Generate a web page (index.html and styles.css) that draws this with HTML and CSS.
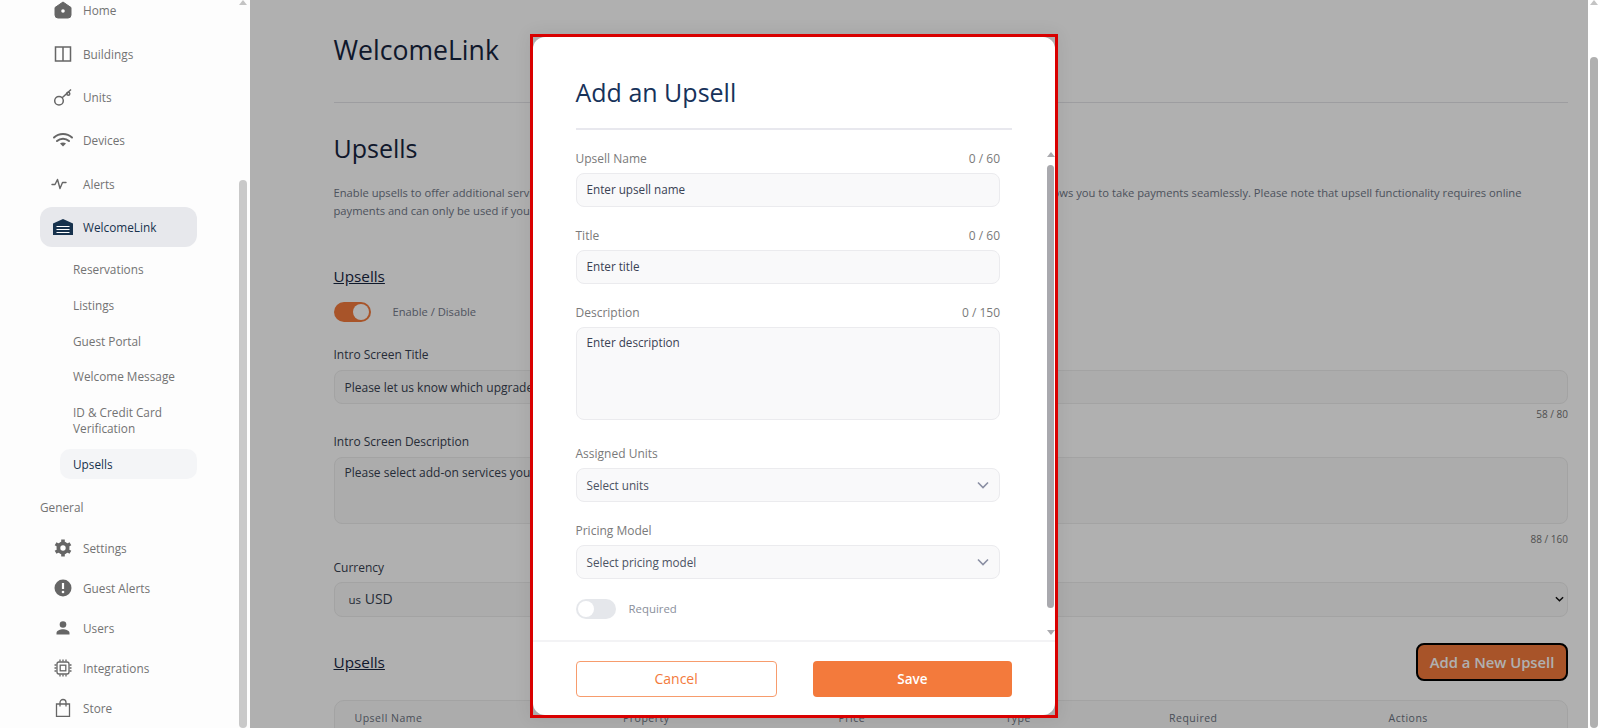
FILE: index.html
```html
<!DOCTYPE html>
<html lang="en">
<head>
    <meta charset="UTF-8">
    <title>Upsells</title>
    <link rel="stylesheet" href="styles.css">
</head>
<body>
    <div class="app">
        <aside class="sidebar">
            <nav class="nav">
                <ul class="nav-group">
                    <li class="nav-item">
                        <svg class="nav-icon" viewBox="0 0 18 18"><path d="M9 1 17 6.500v7.500a3 3 0 0 1-3 3H4a3 3 0 0 1-3-3V6.500z" fill="#666" stroke="#666" stroke-linejoin="round"/><circle cx="9" cy="10" r="1.800" fill="#fff"/></svg>
                        Home
                    </li>
                    <li class="nav-item">
                        <svg class="nav-icon" viewBox="0 0 18 18"><path d="M1.500 2h15v14h-15zM9 2v14" fill="none" stroke="#666" stroke-width="1.500"/></svg>
                        Buildings
                    </li>
                    <li class="nav-item">
                        <svg class="nav-icon" viewBox="0 0 18 18"><g fill="none" stroke="#666" stroke-width="1.500"><circle cx="5" cy="12.800" r="4.300"/><path d="M8.200 9.800 17 1.500"/><circle cx="14.300" cy="5.800" r="1.500"/></g></svg>
                        Units
                    </li>
                    <li class="nav-item">
                        <svg class="nav-icon nav-icon-wide" viewBox="0 0 20 16"><g fill="none" stroke="#666" stroke-width="2" stroke-linecap="round"><path d="M1 5.500c5-4.700 13-4.700 18 0M4 9c3.400-3 8.600-3 12 0"/></g><path d="M7 11.500c1.800-1.200 4.200-1.200 6 0l-3 3z" fill="#666"/></svg>
                        Devices
                    </li>
                    <li class="nav-item">
                        <svg class="nav-icon" viewBox="0 0 18 18"><path d="M-2 9.500h3l2.500-5 2.500 9 2.500-6h3.500" fill="none" stroke="#666" stroke-width="1.400" stroke-linejoin="round" stroke-linecap="round"/></svg>
                        Alerts
                    </li>
                    <li class="nav-item nav-item-active">
                        <svg class="nav-icon nav-icon-wide" viewBox="0 0 20 16"><path d="M0 4.500 10 0l10 4.500V16H0z" fill="#17324d"/><path d="M3.500 7.500h13M3.500 10.500h13M3.500 13.500h13" stroke="#fff" stroke-width="1"/></svg>
                        WelcomeLink
                    </li>
                </ul>
                <ul class="sub-group">
                    <li class="sub-item">Reservations</li>
                    <li class="sub-item">Listings</li>
                    <li class="sub-item">Guest Portal</li>
                    <li class="sub-item">Welcome Message</li>
                    <li class="sub-item sub-item-tall">ID &amp; Credit Card<br>Verification</li>
                    <li class="sub-item sub-item-active">Upsells</li>
                </ul>
                <div class="nav-title">General</div>
                <ul class="nav-group nav-group-tight">
                    <li class="nav-item">
                        <svg class="nav-icon" viewBox="0 0 18 18"><circle cx="9" cy="9" r="6.500" fill="#666"/><path d="M9 .5v17M1.600 4.700l14.800 8.600M1.600 13.300l14.800-8.600" stroke="#666" stroke-width="3.600"/><circle cx="9" cy="9" r="2.700" fill="#fff"/></svg>
                        Settings
                    </li>
                    <li class="nav-item">
                        <svg class="nav-icon" viewBox="0 0 18 18"><circle cx="9" cy="9" r="8.500" fill="#666"/><path d="M9 4v6" stroke="#fff" stroke-width="2.200"/><circle cx="9" cy="13" r="1.300" fill="#fff"/></svg>
                        Guest Alerts
                    </li>
                    <li class="nav-item">
                        <svg class="nav-icon" viewBox="0 0 18 18"><circle cx="9" cy="5.500" r="3.300" fill="#666"/><path d="M2.500 15.500v-1.500c0-2.500 4-3.700 6.500-3.700s6.500 1.200 6.500 3.700v1.500z" fill="#666"/></svg>
                        Users
                    </li>
                    <li class="nav-item">
                        <svg class="nav-icon" viewBox="0 0 18 18"><g fill="none" stroke="#666" stroke-width="1.300"><rect x="3" y="3" width="12" height="12" rx="2"/><rect x="6.200" y="6.200" width="5.600" height="5.600"/><path d="M6 .5v2M9 .5v2M12 .5v2M6 15.500v2M9 15.500v2M12 15.500v2M.5 6h2M.5 9h2M.5 12h2M15.500 6h2M15.500 9h2M15.500 12h2"/></g></svg>
                        Integrations
                    </li>
                    <li class="nav-item">
                        <svg class="nav-icon" viewBox="0 0 18 18"><g fill="none" stroke="#666" stroke-width="1.300"><path d="M2.500 5h13v12.300h-13z"/><path d="M6 7.500V3.500a3 3 0 0 1 6 0v4"/></g></svg>
                        Store
                    </li>
                </ul>
            </nav>
            <div class="scrollbar sidebar-scrollbar">
                <span class="arrow-up"></span>
                <span class="thumb sidebar-thumb"></span>
            </div>
        </aside>

        <div class="page">
            <main class="content">
                <h1 class="page-title">WelcomeLink</h1>
                <h2 class="section-title">Upsells</h2>
                <p class="intro">Enable upsells to offer additional services to all our guests during the check-in process. Connecting our payment gateway such as Stripe allows you to take payments seamlessly. Please note that upsell functionality requires online<br>payments and can only be used if you have a connected payment gateway.</p>

                <h3 class="sub-title">Upsells</h3>
                <div class="switch-row">
                    <span class="switch switch-on"></span>
                    <span class="switch-label">Enable / Disable</span>
                </div>

                <div class="page-label page-label-first">Intro Screen Title</div>
                <div class="page-input">Please let us know which upgrades you would like for your stay</div>
                <div class="page-count">58 / 80</div>

                <div class="page-label">Intro Screen Description</div>
                <div class="page-input page-textarea">Please select add-on services you'd like to include with your reservation below</div>
                <div class="page-count page-count-low">88 / 160</div>

                <div class="page-label">Currency</div>
                <div class="page-input page-select">
                    <span class="currency"><span class="currency-code">us</span> USD</span>
                    <svg class="native-chevron" viewBox="0 0 10 6"><path d="M1 1l4 4 4-4" fill="none" stroke="#111" stroke-width="1.600"/></svg>
                </div>

                <div class="list-head">
                    <h3 class="sub-title sub-title-flat">Upsells</h3>
                    <button class="add-button">Add a New Upsell</button>
                </div>

                <div class="table">
                    <div class="table-head">
                        <span class="col-name">Upsell Name</span>
                        <span>Property</span>
                        <span>Price</span>
                        <span>Type</span>
                        <span>Required</span>
                        <span>Actions</span>
                    </div>
                </div>
            </main>
            <div class="overlay"></div>
        </div>

        <div class="scrollbar page-scrollbar">
            <span class="arrow-up"></span>
            <span class="thumb page-thumb"></span>
        </div>

        <!-- modal -->
        <div class="modal-frame">
            <div class="modal">
                <div class="modal-head">
                    <h2 class="modal-title">Add an Upsell</h2>
                </div>
                <div class="modal-body">
                    <div class="field">
                        <div class="field-top"><span>Upsell Name</span><span>0 / 60</span></div>
                        <div class="input">Enter upsell name</div>
                    </div>
                    <div class="field">
                        <div class="field-top"><span>Title</span><span>0 / 60</span></div>
                        <div class="input">Enter title</div>
                    </div>
                    <div class="field field-wide">
                        <div class="field-top"><span>Description</span><span>0 / 150</span></div>
                        <div class="input textarea">Enter description</div>
                    </div>
                    <div class="field">
                        <div class="field-top"><span>Assigned Units</span></div>
                        <div class="input select">
                            Select units
                            <svg class="chevron" viewBox="0 0 12 8"><path d="M1 1.500l5 5 5-5" fill="none" stroke="#8a8fa3" stroke-width="1.600"/></svg>
                        </div>
                    </div>
                    <div class="field">
                        <div class="field-top"><span>Pricing Model</span></div>
                        <div class="input select">
                            Select pricing model
                            <svg class="chevron" viewBox="0 0 12 8"><path d="M1 1.500l5 5 5-5" fill="none" stroke="#8a8fa3" stroke-width="1.600"/></svg>
                        </div>
                    </div>
                    <div class="required-row">
                        <span class="switch"></span>
                        <span class="required-label">Required</span>
                    </div>
                </div>
                <div class="scrollbar modal-scrollbar">
                    <span class="arrow-up"></span>
                    <span class="thumb modal-thumb"></span>
                    <span class="arrow-down"></span>
                </div>
                <div class="modal-foot">
                    <button class="btn btn-cancel">Cancel</button>
                    <button class="btn btn-save">Save</button>
                </div>
            </div>
        </div>
    </div>
</body>
</html>
```

FILE: styles.css
```css
/* Global Styles */
* {
    box-sizing: border-box;
}

body {
    margin: 0;
    font-family: 'Open Sans', 'Liberation Sans', sans-serif;
    background-color: #fff;
}

ul {
    list-style: none;
    margin: 0;
    padding: 0;
}

.app {
    position: relative;
    display: flex;
    height: 100vh;
    overflow: hidden;
}

/* Sidebar */
.sidebar {
    display: flex;
    width: 250px;
    flex-shrink: 0;
    background-color: #fdfdfd;
}

.nav {
    width: 238px;
    padding: 0 41px 0 40px;
    overflow: hidden;
    font-size: 11.8px;
    color: #737373;
}

.nav-group {
    display: flex;
    flex-direction: column;
    gap: 3.33px;
    margin-top: -9.6px;
}

.nav-group-tight {
    gap: 0;
    margin-top: 11px;
}

.nav-item {
    display: flex;
    align-items: center;
    height: 40px;
    padding-left: 14px;
    gap: 11px;
    border-radius: 12px;
}

.nav-item-active {
    background-color: #e7e8ec;
    color: #17324d;
}

.nav-icon {
    width: 18px;
    height: 18px;
    flex-shrink: 0;
    overflow: visible;
}

.nav-icon-wide {
    width: 20px;
    height: 16px;
    margin-left: -1px;
    margin-right: -1px;
}

.sub-group {
    display: flex;
    flex-direction: column;
    gap: 5.8px;
    margin-top: 7px;
    margin-left: 20px;
}

.sub-item {
    display: flex;
    align-items: center;
    height: 30px;
    padding-left: 13px;
    border-radius: 10px;
}

.sub-item-tall {
    height: auto;
    padding-top: 7px;
    padding-bottom: 7px;
    line-height: 16px;
}

.sub-item-active {
    background-color: #f4f5f7;
    color: #17324d;
}

.nav-title {
    margin-top: 18px;
    line-height: 20px;
}

/* Fake scrollbars */
.scrollbar {
    display: flex;
    flex-direction: column;
    align-items: center;
}

.arrow-up {
    width: 0;
    height: 0;
    border-left: 4px solid transparent;
    border-right: 4px solid transparent;
    border-bottom: 5px solid #c4c4c4;
}

.arrow-down {
    width: 0;
    height: 0;
    border-left: 4px solid transparent;
    border-right: 4px solid transparent;
    border-top: 5px solid #a9a9ae;
}

.thumb {
    border-radius: 4px;
}

.sidebar-scrollbar {
    width: 8px;
    margin-left: 1px;
}

.sidebar-thumb {
    width: 8px;
    height: 600px;
    margin-top: 175px;
    background-color: #c9c9c9;
}

.page-scrollbar {
    width: 12px;
    flex-shrink: 0;
    padding-right: 1px;
}

.page-thumb {
    width: 8px;
    height: 700px;
    margin-top: 52px;
    background-color: #b0b0b0;
}

.modal-scrollbar {
    position: absolute;
    top: 115px;
    right: 1px;
    width: 7px;
}

.modal-thumb {
    width: 7px;
    height: 443px;
    margin-top: 8px;
    margin-bottom: 22px;
    background-color: #a9a9ae;
}

.modal-scrollbar .arrow-up {
    border-bottom-color: #a9a9ae;
}

/* Page behind the modal */
.page {
    position: relative;
    flex: 1;
    min-width: 0;
}

.overlay {
    position: absolute;
    top: 0;
    right: 0;
    bottom: 0;
    left: 0;
    background-color: rgba(0, 0, 0, 0.31);
}

.content {
    padding: 32px 20px 0 83.5px;
    color: #17253f;
}

.page-title {
    margin: 0;
    padding-bottom: 34px;
    border-bottom: 1px solid #e4e4e8;
    font-size: 26.6px;
    font-weight: 400;
    line-height: 36px;
}

.section-title {
    margin: 27px 0 0;
    font-size: 25px;
    font-weight: 400;
    line-height: 36px;
}

.intro {
    margin: 18px 0 0;
    font-size: 11.2px;
    line-height: 17.5px;
    color: #6f7787;
}

.sub-title {
    margin: 47px 0 0;
    font-size: 15.3px;
    font-weight: 500;
    line-height: 20px;
    text-decoration: underline;
}

.sub-title-flat {
    margin: 0;
}

.switch-row {
    display: flex;
    align-items: center;
    margin-top: 16px;
    gap: 22px;
}

.switch {
    position: relative;
    display: inline-block;
    width: 40px;
    height: 20px;
    border-radius: 10px;
    background-color: #e5e7eb;
}

.switch::after {
    content: "";
    position: absolute;
    top: 2px;
    left: 2px;
    width: 16px;
    height: 16px;
    border-radius: 50%;
    background-color: #fff;
}

.switch-on {
    width: 37px;
    background-color: #f37a3c;
}

.switch-on::after {
    left: 19px;
}

.switch-label {
    padding-bottom: 1px;
    font-size: 11.2px;
    color: #73798a;
}

.page-label {
    margin-top: 12px;
    font-size: 12px;
    font-weight: 500;
    line-height: 18px;
    color: #374151;
}

.page-label-first {
    margin-top: 24px;
}

.page-input {
    display: flex;
    align-items: center;
    height: 34px;
    margin-top: 6px;
    padding: 0 10px;
    border: 1px solid #ececec;
    border-radius: 8px;
    background-color: #f9f9f9;
    font-size: 12px;
    color: #374151;
}

.page-textarea {
    align-items: flex-start;
    height: 67px;
    padding-top: 6px;
}

.page-select {
    justify-content: space-between;
    margin-top: 5px;
    height: 35px;
    padding: 0 3px 2px 14px;
}

.currency {
    font-size: 14px;
}

.currency-code {
    font-size: 11.5px;
}

.native-chevron {
    width: 9px;
    height: 6px;
}

.page-count {
    margin-top: 3px;
    font-size: 10px;
    line-height: 14px;
    text-align: right;
    color: #737373;
}

.page-count-low {
    margin-top: 8px;
}

.page-count-low + .page-label {
    margin-top: 13px;
}

.list-head {
    display: flex;
    justify-content: space-between;
    align-items: center;
    margin-top: 26px;
}

.add-button {
    width: 152px;
    height: 38px;
    border: 2px solid #000;
    border-radius: 8px;
    background-color: #f37a3c;
    font-family: inherit;
    font-size: 14.8px;
    font-weight: 600;
    color: #fff;
}

.table {
    height: 80px;
    margin-top: 19px;
    border: 1px solid #ececec;
    border-radius: 10px;
    background-color: #f9fafa;
}

.table-head {
    display: grid;
    grid-template-columns: 268.5px 215.5px 167px 163.5px 219.5px 1fr;
    padding: 9px 0 0 20px;
    font-size: 10.5px;
    font-weight: 500;
    letter-spacing: 0.5px;
    line-height: 16px;
    color: #6b7280;
}

/* Modal */
.modal-frame {
    position: absolute;
    top: 34px;
    left: 530px;
    width: 528px;
    height: 684px;
    border: 3px solid #d90000;
    box-shadow: 0 0 16px rgba(0, 0, 0, 0.08);
}

.modal {
    position: relative;
    display: flex;
    flex-direction: column;
    height: 100%;
    border-radius: 12px;
    background-color: #fff;
}

.modal-head {
    margin: 0 43px 0 42.5px;
    height: 93px;
    padding-top: 37px;
    border-bottom: 2px solid #e8e8ee;
}

.modal-title {
    margin: 0;
    font-size: 25px;
    font-weight: 400;
    line-height: 36px;
    color: #17325a;
}

.modal-body {
    flex: 1;
    padding: 19px 55px 0 42.5px;
}

.field {
    margin-bottom: 19px;
}

.field-wide {
    margin-bottom: 24px;
}

.field-top {
    display: flex;
    justify-content: space-between;
    padding-top: 1px;
    margin-bottom: 5px;
    font-size: 12px;
    line-height: 18px;
    color: #7a7a7a;
}

.input {
    display: flex;
    align-items: center;
    justify-content: space-between;
    height: 34px;
    padding: 0 10px 2px;
    border: 1px solid #ebebee;
    border-radius: 8px;
    background-color: #f9f9fa;
    font-size: 11.7px;
    color: #3a4254;
}

.textarea {
    align-items: flex-start;
    height: 93px;
    padding-top: 6px;
}

.select {
    padding-bottom: 1px;
    color: #4b5262;
}

.chevron {
    width: 12px;
    height: 8px;
}

.required-row {
    display: flex;
    align-items: center;
    gap: 13px;
    margin-top: 20px;
}

.required-label {
    font-size: 11.4px;
    padding-bottom: 1px;
    color: #8a8f9b;
}

.modal-foot {
    display: flex;
    gap: 36px;
    height: 75px;
    padding: 19px 43px 18px 42.5px;
    border-top: 2px solid #f3f3f5;
}

.btn {
    flex: 1;
    border-radius: 4px;
    padding-bottom: 2px;
    font-family: inherit;
    font-size: 13.5px;
}

.btn-cancel {
    border: 1px solid #f79c6d;
    background-color: #fff;
    font-size: 14px;
    color: #f37a3c;
}

.btn-save {
    border: none;
    background-color: #f37a3c;
    font-weight: 600;
    color: #fff;
}
```
